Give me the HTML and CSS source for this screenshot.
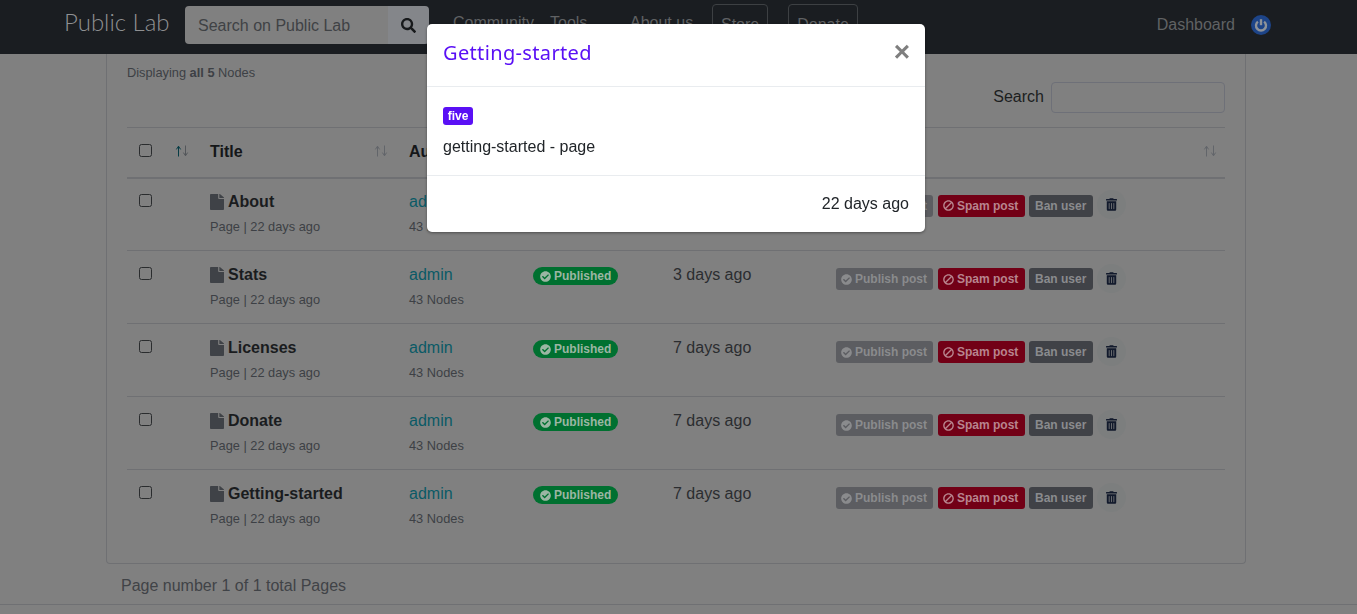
FILE: index.html
```html
<!DOCTYPE html>
<html lang="en">
<head>
<meta charset="utf-8">
<title>Public Lab</title>
<link rel="stylesheet" href="styles.css">
</head>
<body>
<svg class="defs" width="0" height="0" aria-hidden="true">
  <symbol id="i-file" viewBox="0 0 384 512" preserveAspectRatio="none"><path d="M224 136V0H24C10.7 0 0 10.7 0 24v464c0 13.3 10.7 24 24 24h336c13.3 0 24-10.7 24-24V160H248c-13.2 0-24-10.8-24-24zm160-14.1v6.1H256V0h6.1c6.4 0 12.5 2.5 17 7l97.9 98c4.5 4.5 7 10.6 7 16.9z"/></symbol>
  <symbol id="i-search" viewBox="0 0 512 512"><path d="M505 442.7L405.3 343c-4.5-4.5-10.6-7-17-7H372c27.6-35.3 44-79.7 44-128C416 93.1 322.9 0 208 0S0 93.1 0 208s93.1 208 208 208c48.3 0 92.7-16.4 128-44v16.3c0 6.4 2.5 12.5 7 17l99.7 99.7c9.4 9.4 24.6 9.4 33.9 0l28.3-28.3c9.4-9.4 9.4-24.6.1-34zM208 336c-70.7 0-128-57.2-128-128 0-70.7 57.2-128 128-128 70.7 0 128 57.2 128 128 0 70.7-57.2 128-128 128z"/></symbol>
  <symbol id="i-check" viewBox="0 0 512 512"><path d="M504 256c0 136.967-111.033 248-248 248S8 392.967 8 256 119.033 8 256 8s248 111.033 248 248zM227.314 387.314l184-184c6.248-6.248 6.248-16.379 0-22.627l-22.627-22.627c-6.248-6.249-16.379-6.249-22.628 0L216 308.118l-70.059-70.059c-6.248-6.248-16.379-6.248-22.628 0l-22.627 22.627c-6.248 6.248-6.248 16.379 0 22.627l104 104c6.249 6.249 16.379 6.249 22.628.001z"/></symbol>
  <symbol id="i-ban" viewBox="0 0 512 512"><path transform="matrix(-1 0 0 1 512 0)" d="M256 8C119.034 8 8 119.033 8 256s111.034 248 248 248 248-111.034 248-248S392.967 8 256 8zm130.108 117.892c65.448 65.448 70 165.481 20.677 235.637L150.47 105.216c70.204-49.356 170.226-44.735 235.638 20.676zM125.892 386.108c-65.448-65.448-70-165.481-20.677-235.637L361.53 406.784c-70.203 49.356-170.226 44.736-235.638-20.676z"/></symbol>
  <symbol id="i-trash" viewBox="0 0 448 512"><path d="M32 464a48 48 0 0 0 48 48h288a48 48 0 0 0 48-48V128H32zm272-256a16 16 0 0 1 32 0v224a16 16 0 0 1-32 0zm-96 0a16 16 0 0 1 32 0v224a16 16 0 0 1-32 0zm-96 0a16 16 0 0 1 32 0v224a16 16 0 0 1-32 0zM432 32H312l-9.4-18.7A24 24 0 0 0 281.1 0H166.8a23.72 23.72 0 0 0-21.4 13.3L136 32H16A16 16 0 0 0 0 48v32a16 16 0 0 0 16 16h416a16 16 0 0 0 16-16V48a16 16 0 0 0-16-16z"/></symbol>
  <symbol id="i-sort" viewBox="0 0 7 12"><path d="M3.5 11.5V1.5M1.4 4.4 3.5 1.2l2.1 3.2" fill="none" stroke="currentColor" stroke-width="1"/></symbol>
  <symbol id="i-sort-d" viewBox="0 0 7 12"><path d="M3.5.5v10M1.4 7.6l2.1 3.2 2.1-3.2" fill="none" stroke="currentColor" stroke-width="1"/></symbol>
</svg>

<header class="nav">
  <a class="brand">Public Lab</a>
  <form class="nav-search">
    <span class="nav-search-input">Search on Public Lab</span>
    <span class="nav-search-btn"><svg class="ic-search"><use href="#i-search"/></svg></span>
  </form>
  <nav class="nav-links">
    <a class="nav-community">Community</a>
    <a class="nav-tools">Tools</a>
    <a class="nav-about">About us</a>
    <a class="nav-btn nav-store">Store</a>
    <a class="nav-btn">Donate</a>
  </nav>
  <div class="nav-right">
    <a>Dashboard</a>
    <span class="power"><svg viewBox="0 0 20 20" class="ic-power"><circle cx="10" cy="10" r="10" fill="#1d4488"/><path d="M6.9 6.6a5 5 0 1 0 6.2 0" fill="none" stroke="#8f9399" stroke-width="2.4"/><path d="M10 4.2v6" stroke="#8f9399" stroke-width="2.4"/></svg></span>
  </div>
</header>

<main class="main">
  <section class="card">
    <p class="display">Displaying <b>all 5</b> Nodes</p>
    <div class="filter"><label class="filter-label">Search</label><span class="filter-input"></span></div>
    <table class="table">
      <colgroup><col class="c1"><col class="c2"><col class="c3"><col class="c4"><col class="c5"><col class="c6"></colgroup>
      <thead>
        <tr>
          <th><span class="chk"></span><span class="sort sort-first"><svg class="up"><use href="#i-sort"/></svg><svg class="dn"><use href="#i-sort-d"/></svg></span></th>
          <th class="shift">Title<span class="sort"><svg><use href="#i-sort"/></svg><svg><use href="#i-sort-d"/></svg></span></th>
          <th class="shift">Author</th>
          <th></th>
          <th></th>
          <th><span class="sort"><svg><use href="#i-sort"/></svg><svg><use href="#i-sort-d"/></svg></span></th>
        </tr>
      </thead>
      <tbody>
        <tr>
          <td><span class="chk"></span></td>
          <td class="shift"><div class="t"><svg class="ic-file"><use href="#i-file"/></svg>About</div><div class="s">Page | 22 days ago</div></td>
          <td class="shift"><a class="l">admin</a><div class="s">43 Nodes</div></td>
          <td><span class="pub"><svg class="ic"><use href="#i-check"/></svg>Published</span></td>
          <td class="shift date">3 days ago</td>
          <td><div class="acts"><span class="b b-pub"><svg class="ic"><use href="#i-check"/></svg>Publish post</span><span class="b b-spam"><svg class="ic"><use href="#i-ban"/></svg>Spam post</span><span class="b b-ban">Ban user</span><span class="del"><svg class="ic-trash"><use href="#i-trash"/></svg></span></div></td>
        </tr>
        <tr>
          <td><span class="chk"></span></td>
          <td class="shift"><div class="t"><svg class="ic-file"><use href="#i-file"/></svg>Stats</div><div class="s">Page | 22 days ago</div></td>
          <td class="shift"><a class="l">admin</a><div class="s">43 Nodes</div></td>
          <td><span class="pub"><svg class="ic"><use href="#i-check"/></svg>Published</span></td>
          <td class="shift date">3 days ago</td>
          <td><div class="acts"><span class="b b-pub"><svg class="ic"><use href="#i-check"/></svg>Publish post</span><span class="b b-spam"><svg class="ic"><use href="#i-ban"/></svg>Spam post</span><span class="b b-ban">Ban user</span><span class="del"><svg class="ic-trash"><use href="#i-trash"/></svg></span></div></td>
        </tr>
        <tr>
          <td><span class="chk"></span></td>
          <td class="shift"><div class="t"><svg class="ic-file"><use href="#i-file"/></svg>Licenses</div><div class="s">Page | 22 days ago</div></td>
          <td class="shift"><a class="l">admin</a><div class="s">43 Nodes</div></td>
          <td><span class="pub"><svg class="ic"><use href="#i-check"/></svg>Published</span></td>
          <td class="shift date">7 days ago</td>
          <td><div class="acts"><span class="b b-pub"><svg class="ic"><use href="#i-check"/></svg>Publish post</span><span class="b b-spam"><svg class="ic"><use href="#i-ban"/></svg>Spam post</span><span class="b b-ban">Ban user</span><span class="del"><svg class="ic-trash"><use href="#i-trash"/></svg></span></div></td>
        </tr>
        <tr>
          <td><span class="chk"></span></td>
          <td class="shift"><div class="t"><svg class="ic-file"><use href="#i-file"/></svg>Donate</div><div class="s">Page | 22 days ago</div></td>
          <td class="shift"><a class="l">admin</a><div class="s">43 Nodes</div></td>
          <td><span class="pub"><svg class="ic"><use href="#i-check"/></svg>Published</span></td>
          <td class="shift date">7 days ago</td>
          <td><div class="acts"><span class="b b-pub"><svg class="ic"><use href="#i-check"/></svg>Publish post</span><span class="b b-spam"><svg class="ic"><use href="#i-ban"/></svg>Spam post</span><span class="b b-ban">Ban user</span><span class="del"><svg class="ic-trash"><use href="#i-trash"/></svg></span></div></td>
        </tr>
        <tr>
          <td><span class="chk"></span></td>
          <td class="shift"><div class="t"><svg class="ic-file"><use href="#i-file"/></svg>Getting-started</div><div class="s">Page | 22 days ago</div></td>
          <td class="shift"><a class="l">admin</a><div class="s">43 Nodes</div></td>
          <td><span class="pub"><svg class="ic"><use href="#i-check"/></svg>Published</span></td>
          <td class="shift date">7 days ago</td>
          <td><div class="acts"><span class="b b-pub"><svg class="ic"><use href="#i-check"/></svg>Publish post</span><span class="b b-spam"><svg class="ic"><use href="#i-ban"/></svg>Spam post</span><span class="b b-ban">Ban user</span><span class="del"><svg class="ic-trash"><use href="#i-trash"/></svg></span></div></td>
        </tr>
      </tbody>
    </table>
  </section>
  <p class="pages">Page number 1 of 1 total Pages</p>
</main>
<footer class="foot"></footer>

<div class="modal">
  <div class="modal-head">
    <h5 class="modal-title">Getting-started</h5>
    <span class="close">×</span>
  </div>
  <div class="modal-body">
    <span class="tag">five</span>
    <p class="modal-text">getting-started - page</p>
  </div>
  <div class="modal-foot">22 days ago</div>
</div>
</body>
</html>
```

FILE: styles.css
```css
* { box-sizing: border-box; }
html, body { margin: 0; height: 614px; overflow: hidden; }
body {
  background: #808080;
  color: #1c1e20;
  font-family: "Liberation Sans", Arial, sans-serif;
  font-size: 16px;
  line-height: 24px;
}
.defs { position: absolute; }
p { margin: 0; }

.nav {
  height: 54px;
  background: #1a1d21;
  display: flex;
  align-items: flex-start;
  color: #606264;
}
.brand {
  margin: 5px 0 0 64px;
  width: 121px;
  font-family: Lato, sans-serif;
  font-weight: 300;
  font-size: 24px;
  line-height: 34px;
  color: #8f9092;
}
.nav-search { display: flex; width: 244px; height: 38px; margin-top: 6px; }
.nav-search-input {
  flex: 1;
  background: #808080;
  border-radius: 4px 0 0 4px;
  padding: 8px 13px 6px;
  color: #3f4245;
}
.nav-search-btn {
  width: 41px;
  background: #84868a;
  border-radius: 0 4px 4px 0;
  display: flex;
  align-items: center;
  justify-content: center;
}
.ic-search { width: 15px; height: 15px; fill: #17191b; }
.nav-links { display: flex; margin: 4px 0 0 24px; line-height: 38px; }
.nav-links a { display: block; }
.nav-community { width: 97px; }
.nav-tools { width: 80px; }
.nav-about { width: 82px; }
.nav-links .nav-btn { height: 38px; padding: 0 8px; border: 1px solid #3d4043; border-radius: 4px; line-height: 40px; }
.nav-links .nav-store { margin-right: 20px; }
.nav-right { display: flex; align-items: center; margin-left: auto; margin-right: 86px; height: 50px; }
.power { width: 20px; height: 20px; margin-left: 16px; }
.ic-power { display: block; width: 20px; height: 20px; }

.main { padding: 0 111px 0 106px; }
.card {
  height: 510px;
  padding: 0 20px;
  border: 1px solid #6f7073;
  border-top: 0;
  border-radius: 0 0 4px 4px;
}
.display { font-size: 12.8px; line-height: 20px; padding-top: 9px; height: 29px; color: #3d4045; }
.filter { display: flex; justify-content: flex-end; align-items: center; gap: 7px; margin-top: -1px; height: 31px; }
.filter-label { margin-top: -1px; }
.filter-input { width: 174px; height: 31px; border: 1px solid #6e7078; border-radius: 4px; }

.table { width: 1098px; border-collapse: collapse; table-layout: fixed; margin-top: 14px; }
.c1 { width: 70px; } .c2 { width: 199px; } .c3 { width: 125px; }
.c4 { width: 139px; } .c5 { width: 164px; } .c6 { width: 401px; }
th {
  position: relative;
  height: 50px;
  padding: 0 12px;
  text-align: left;
  font-weight: 700;
  color: #141618;
  border-top: 1px solid #6f7073;
  border-bottom: 2px solid #6f7073;
}
td {
  height: 73px;
  padding: 12px 12px 0;
  vertical-align: top;
  border-bottom: 1px solid #6f7073;
}
tbody tr:first-child td { padding-top: 11px; }
th.shift, td.shift { padding-left: 13px; }
tbody tr:last-child td { border-bottom: 0; }
.chk {
  display: block;
  width: 13px;
  height: 13px;
  border: 1px solid #2a2c2e;
  border-radius: 2.5px;
  margin-top: 4px;
}
th .chk { margin-top: -4px; }
.sort { position: absolute; right: 8px; top: 17px; display: flex; color: #62656a; }
.sort svg { width: 7px; height: 12px; display: block; }
.sort .up { color: #063c45; }
.sort .dn { color: #53565a; }
.sort-first { right: auto; left: 48px; }
.t { font-weight: 700; color: #1a1c1e; display: flex; align-items: center; }
.ic-file { width: 14px; height: 16px; margin-right: 4px; fill: #3f4247; flex: none; }
.s { font-size: 12.8px; color: #3d4045; line-height: 20px; margin-top: 3px; }
.l { color: #0a5a66; }
.pub {
  display: inline-flex;
  align-items: center;
  height: 18px;
  margin-top: 4px;
  padding: 0 7px;
  border-radius: 9px;
  background: #007030;
  color: #9bb6a3;
  font-size: 12px;
  font-weight: 700;
  white-space: nowrap;
}
.ic { width: 11px; height: 11px; margin-right: 3px; fill: currentColor; flex: none; }
.date { color: #2b2d30; }
.acts { display: flex; gap: 5px; align-items: center; margin-top: 2px; height: 28px; }
.b {
  display: inline-flex;
  align-items: center;
  height: 22px;
  padding: 0 5px;
  border-radius: 3px;
  font-size: 12px;
  font-weight: 700;
  white-space: nowrap;
  flex: none;
}
.b-pub { background: #5c5d61; color: #8a8b8d; width: 97px; }
.b-spam { background: #720016; color: #b8848e; width: 87px; }
.b-ban { background: #404247; color: #8a8b8e; width: 64px; margin-left: -1px; padding: 0 6px; }
.del {
  width: 29px; height: 29px; border-radius: 50%;
  background: #7c7e7e;
  display: flex; align-items: center; justify-content: center;
  margin: -2px 0 0 -1px;
  flex: none;
}
.ic-trash { width: 11px; height: 13px; fill: #121a2c; }

.pages { padding: 10px 0 0 15px; color: #404347; }
.foot { margin-top: 6px; border-top: 1px solid #6f7073; }

.modal {
  position: fixed;
  left: 427px;
  top: 24px;
  width: 498px;
  height: 208px;
  background: #fff;
  border-radius: 5px;
  box-shadow: 0 1px 3px rgba(0,0,0,.4);
  display: flex;
  flex-direction: column;
  color: #212529;
}
.modal-head {
  height: 63px;
  padding: 0 16px 4px;
  display: flex;
  align-items: center;
  justify-content: space-between;
  border-bottom: 1px solid #e9ecef;
}
.modal-title {
  margin: 0;
  font-family: "Noto Sans", sans-serif;
  font-weight: 400;
  font-size: 20px;
  letter-spacing: .35px;
  color: #5a10f5;
}
.close { font-size: 28px; font-weight: 700; color: #7f7f7f; line-height: 24px; margin: -2px -1px 0 0; }
.modal-body {
  height: 89px;
  padding: 20px 16px 0;
  border-bottom: 1px solid #e9ecef;
}
.tag {
  display: block;
  width: 30px;
  height: 18px;
  background: #5a10f5;
  color: #fff;
  border-radius: 3px;
  font-size: 12px;
  font-weight: 700;
  line-height: 18px;
  text-align: center;
}
.modal-text { margin-top: 10px; }
.modal-foot { flex: 1; padding: 16px 16px 0; text-align: right; }
```
